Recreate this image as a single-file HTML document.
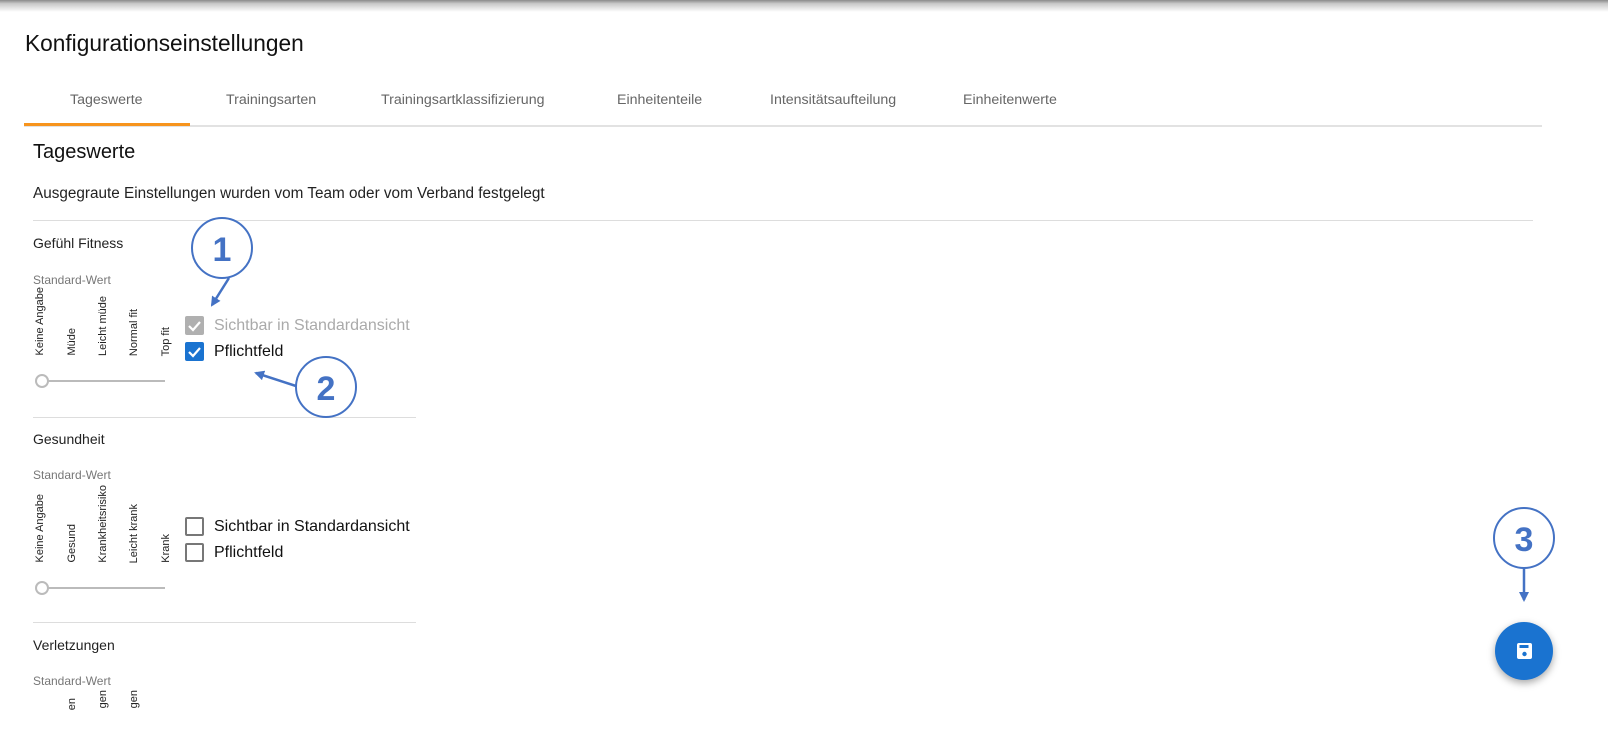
<!DOCTYPE html>
<html><head><meta charset="utf-8"><style>
*{margin:0;padding:0;box-sizing:border-box}
html{width:1608px;height:730px;overflow:hidden}
body{width:1608px;height:730px;overflow:hidden;background:#fff;font-family:"Liberation Sans",Arial,sans-serif;position:relative;color:#222}
.a{position:absolute;white-space:nowrap}
.topsh{position:absolute;left:0;top:0;width:1608px;height:12px;background:linear-gradient(#8a8a8a,#c8c8c8 30%,rgba(255,255,255,0))}
.tab{position:absolute;top:92px;font-size:14.2px;color:#666}
.v{position:absolute;writing-mode:vertical-rl;transform:rotate(180deg);font-size:11px;color:#222;white-space:nowrap;line-height:11px}
.cb{position:absolute;width:19px;height:19px;border-radius:2px}
.lbl{position:absolute;font-size:16px}
.sl{position:absolute;height:2px;background:#bbb}
.knob{position:absolute;width:14px;height:14px;border-radius:50%;border:2px solid #bbb;background:#fff}
.hr{position:absolute;height:1px;background:#ddd}
</style></head><body>
<div class="topsh"></div>
<div class="a" style="left:25px;top:30px;font-size:22.7px;color:#111">Konfigurationseinstellungen</div>
<div class="tab" style="left:70px">Tageswerte</div>
<div class="tab" style="left:226px">Trainingsarten</div>
<div class="tab" style="left:381px">Trainingsartklassifizierung</div>
<div class="tab" style="left:617px">Einheitenteile</div>
<div class="tab" style="left:770px">Intensitätsaufteilung</div>
<div class="tab" style="left:963px">Einheitenwerte</div>
<div class="hr" style="left:24px;top:125px;width:1518px;background:#e2e2e2;height:2px"></div>
<div class="a" style="left:24px;top:123px;width:166px;height:3px;background:#f7941d"></div>
<div class="a" style="left:33px;top:141px;font-size:20px;color:#111">Tageswerte</div>
<div class="a" style="left:33px;top:185px;font-size:15.3px;color:#222">Ausgegraute Einstellungen wurden vom Team oder vom Verband festgelegt</div>
<div class="hr" style="left:33px;top:220px;width:1500px"></div>

<div class="a" style="left:33px;top:235px;font-size:14px">Gefühl Fitness</div>
<div class="a" style="left:33px;top:273px;font-size:12px;color:#777">Standard-Wert</div>
<div class="v" style="left:35px;bottom:374px">Keine Angabe</div>
<div class="v" style="left:67px;bottom:374px">Müde</div>
<div class="v" style="left:98px;bottom:374px">Leicht müde</div>
<div class="v" style="left:129px;bottom:374px">Normal fit</div>
<div class="v" style="left:161px;bottom:374px">Top fit</div>
<div class="sl" style="left:40px;top:380px;width:125px"></div>
<div class="knob" style="left:35px;top:374px"></div>
<div class="cb" style="left:185px;top:316px;background:#b0b0b0"><svg width="19" height="19"><path d="M4 10l4 4 7-8" stroke="#fff" stroke-width="2.2" fill="none"/></svg></div>
<div class="lbl" style="left:214px;top:317px;color:#aaa">Sichtbar in Standardansicht</div>
<div class="cb" style="left:185px;top:342px;background:#1a73d0"><svg width="19" height="19"><path d="M4 10l4 4 7-8" stroke="#fff" stroke-width="2.2" fill="none"/></svg></div>
<div class="lbl" style="left:214px;top:343px;color:#111">Pflichtfeld</div>
<div class="hr" style="left:33px;top:417px;width:383px"></div>

<div class="a" style="left:33px;top:431px;font-size:14px">Gesundheit</div>
<div class="a" style="left:33px;top:468px;font-size:12px;color:#777">Standard-Wert</div>
<div class="v" style="left:35px;bottom:167px">Keine Angabe</div>
<div class="v" style="left:67px;bottom:167px">Gesund</div>
<div class="v" style="left:98px;bottom:167px">Krankheitsrisiko</div>
<div class="v" style="left:129px;bottom:167px">Leicht krank</div>
<div class="v" style="left:161px;bottom:167px">Krank</div>
<div class="sl" style="left:40px;top:587px;width:125px"></div>
<div class="knob" style="left:35px;top:581px"></div>
<div class="cb" style="left:185px;top:517px;border:2px solid #777"></div>
<div class="lbl" style="left:214px;top:518px;color:#111">Sichtbar in Standardansicht</div>
<div class="cb" style="left:185px;top:543px;border:2px solid #777"></div>
<div class="lbl" style="left:214px;top:544px;color:#111">Pflichtfeld</div>
<div class="hr" style="left:33px;top:622px;width:383px"></div>

<div class="a" style="left:33px;top:637px;font-size:14px">Verletzungen</div>
<div class="a" style="left:33px;top:674px;font-size:12px;color:#777">Standard-Wert</div>
<div class="v" style="left:67px;top:698px">en</div>
<div class="v" style="left:98px;top:690px">gen</div>
<div class="v" style="left:129px;top:690px">gen</div>

<div class="a" style="left:1495px;top:622px;width:58px;height:58px;border-radius:50%;background:#1a73d0;box-shadow:0 3px 8px rgba(0,0,0,.35)">
<svg width="58" height="58" viewBox="0 0 58 58"><rect x="22" y="21" width="15" height="16" rx="2" fill="#fff"/><rect x="24.5" y="23" width="9" height="3" fill="#1a73d0"/><circle cx="29.5" cy="32" r="2.2" fill="#1a73d0"/></svg>
</div>

<svg class="a" style="left:0;top:0" width="1608" height="730">
<defs><marker id="ar" markerWidth="10" markerHeight="10" refX="8" refY="5" orient="auto" markerUnits="userSpaceOnUse"><path d="M0 0L10 5L0 10z" fill="#4472c4"/></marker></defs>
<g fill="#fff" stroke="#4472c4" stroke-width="2">
<circle cx="222" cy="248" r="30"/><circle cx="326" cy="387" r="30"/><circle cx="1524" cy="538" r="30"/>
</g>
<g stroke="#4472c4" stroke-width="2.5" fill="none">
<path d="M229 278L212 305" marker-end="url(#ar)"/>
<path d="M296 386L256 373" marker-end="url(#ar)"/>
<path d="M1524 568L1524 600" marker-end="url(#ar)"/>
</g>
<g fill="#4472c4" font-family="Liberation Sans,sans-serif" font-weight="bold" font-size="34" text-anchor="middle">
<text x="222" y="261">1</text><text x="326" y="400">2</text><text x="1524" y="551">3</text>
</g>
</svg>
</body></html>
